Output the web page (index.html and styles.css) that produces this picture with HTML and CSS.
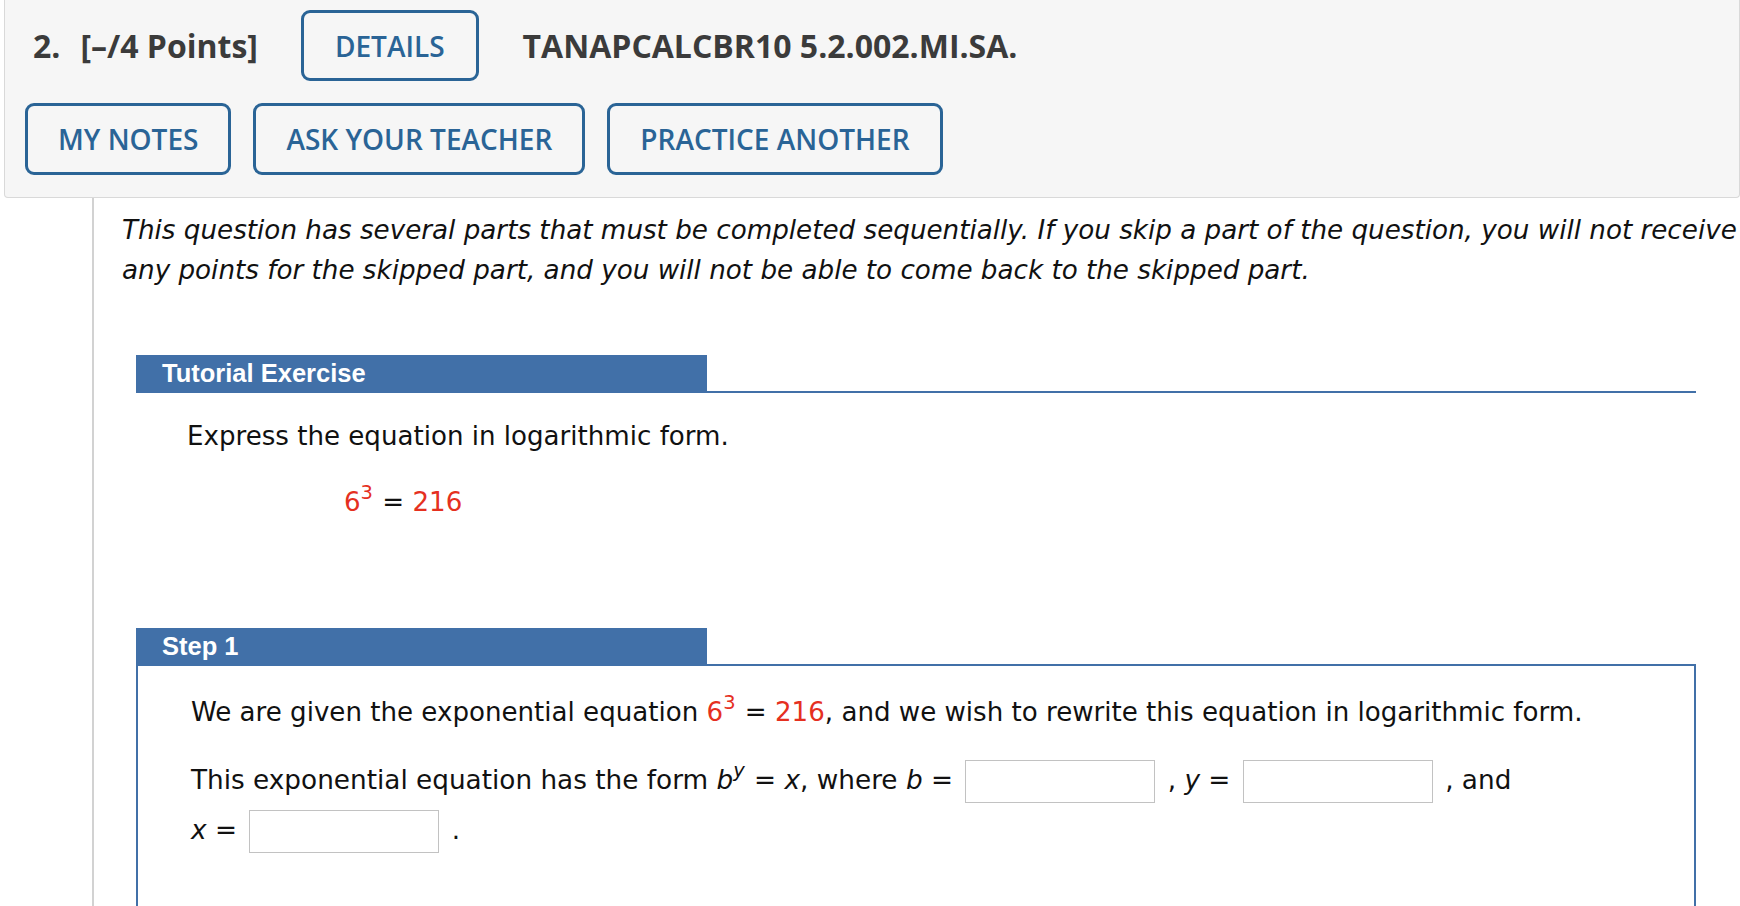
FILE: index.html
```html
<!DOCTYPE html>
<html>
<head>
<meta charset="utf-8">
<title>Question 2</title>
<link rel="stylesheet" href="styles.css">
</head>
<body>
<div class="qhead">
  <div class="row1">
    <span class="qnum">2.</span>
    <span class="qpts">[–/4 Points]</span>
    <button class="btn btn-details">DETAILS</button>
    <span class="qcode">TANAPCALCBR10 5.2.002.MI.SA.</span>
  </div>
  <div class="row2">
    <button class="btn">MY NOTES</button>
    <button class="btn">ASK YOUR TEACHER</button>
    <button class="btn">PRACTICE ANOTHER</button>
  </div>
</div>
<div class="qbody">
  <p class="intro">This question has several parts that must be completed sequentially. If you skip a part of the question, you will not receive<br>any points for the skipped part, and you will not be able to come back to the skipped part.</p>
  <section class="exercise">
    <div class="tab-head"><div class="tab">Tutorial Exercise</div></div>
    <div class="ex-content">
      <p class="line">Express the equation in logarithmic form.</p>
      <p class="line eq"><span class="red">6<span class="sup">3</span></span> = <span class="red">216</span></p>
    </div>
  </section>
  <section class="step">
    <div class="tab-head"><div class="tab">Step 1</div></div>
    <div class="step-box">
      <p class="line">We are given the exponential equation <span class="red">6<span class="sup">3</span></span> = <span class="red">216</span>, and we wish to rewrite this equation in logarithmic form.</p>
      <p class="fill">This exponential equation has the form <i>b</i><span class="sup"><i>y</i></span> = <i>x</i>, where <i>b</i> = <input class="ans" type="text"> , <i>y</i> = <input class="ans" type="text"> , and<br><i>x</i> = <input class="ans" type="text"> .</p>
    </div>
  </section>
</div>
</body>
</html>
```

FILE: styles.css
```css
* { box-sizing: border-box; }
html, body { margin: 0; padding: 0; }
body {
  background: #ffffff;
  overflow: hidden;
  font-family: "DejaVu Sans", Verdana, sans-serif;
  color: #111111;
}

/* ---------- header panel ---------- */
.qhead {
  margin-left: 4px;
  background: #f6f6f6;
  border: 1px solid #d9d9d9;
  border-top: none;
  border-radius: 0 0 4px 4px;
  padding: 10px 0 22px 20px;
}
.row1 {
  display: flex;
  align-items: center;
  height: 71px;
}
.qnum, .qpts, .qcode {
  font-family: "Open Sans", "Noto Sans", sans-serif;
  font-weight: 700;
  font-size: 32px;
  color: #3b3b3b;
}
.qnum { margin-left: 8px; margin-right: 20px; }
.btn {
  font-family: "Open Sans", "Noto Sans", sans-serif;
  font-weight: 600;
  font-size: 28px;
  line-height: 1;
  color: #2a6496;
  background: transparent;
  border: 3px solid #2a6496;
  border-radius: 9px;
  height: 71px;
  padding: 0 30px;
  cursor: pointer;
}
.btn-details { margin-left: 43px; padding: 0 31px; }
.qcode { margin-left: 44px; }
.row2 {
  display: flex;
  gap: 22px;
  margin-top: 22px;
}
.row2 .btn { height: 72px; }

/* ---------- question body ---------- */
.qbody {
  margin-left: 92px;
  border-left: 2px solid #d2d2d2;
  padding: 12px 0 0 28px;
  min-height: 760px;
}
.intro {
  margin: 0;
  font-style: italic;
  font-size: 26.2px;
  line-height: 40px;
  white-space: nowrap;
}
.exercise, .step {
  margin-left: 14px;
  width: 1560px;
}
.exercise { margin-top: 65px; }
.step { margin-top: 106px; }
.tab-head {
  display: flex;
  border-bottom: 2px solid #4170a8;
}
.tab {
  width: 571px;
  height: 36px;
  background: #4170a8;
  color: #ffffff;
  font-family: "Liberation Sans", Arial, sans-serif;
  font-weight: 700;
  font-size: 25.5px;
  line-height: 37px;
  padding-left: 26px;
}
.ex-content { padding: 23px 0 0 51px; }
.line {
  margin: 0;
  font-size: 26.1px;
  line-height: 40px;
}
.eq { margin-top: 26px; padding-left: 157px; }
.red { color: #e5301f; }
.sup {
  font-size: 19.5px;
  vertical-align: 12px;
  line-height: 0;
  margin-right: 1px;
}
.step-box {
  border: 2px solid #4170a8;
  border-top: none;
  padding: 26px 0 0 53px;
  min-height: 400px;
}
.fill {
  margin: 23px 0 0;
  font-size: 26.3px;
  line-height: 50px;
}
.ans {
  width: 190px;
  height: 43px;
  border: 1px solid #c2c2c2;
  background: #ffffff;
  margin: 0 4px;
  vertical-align: middle;
  padding: 0;
}
```
